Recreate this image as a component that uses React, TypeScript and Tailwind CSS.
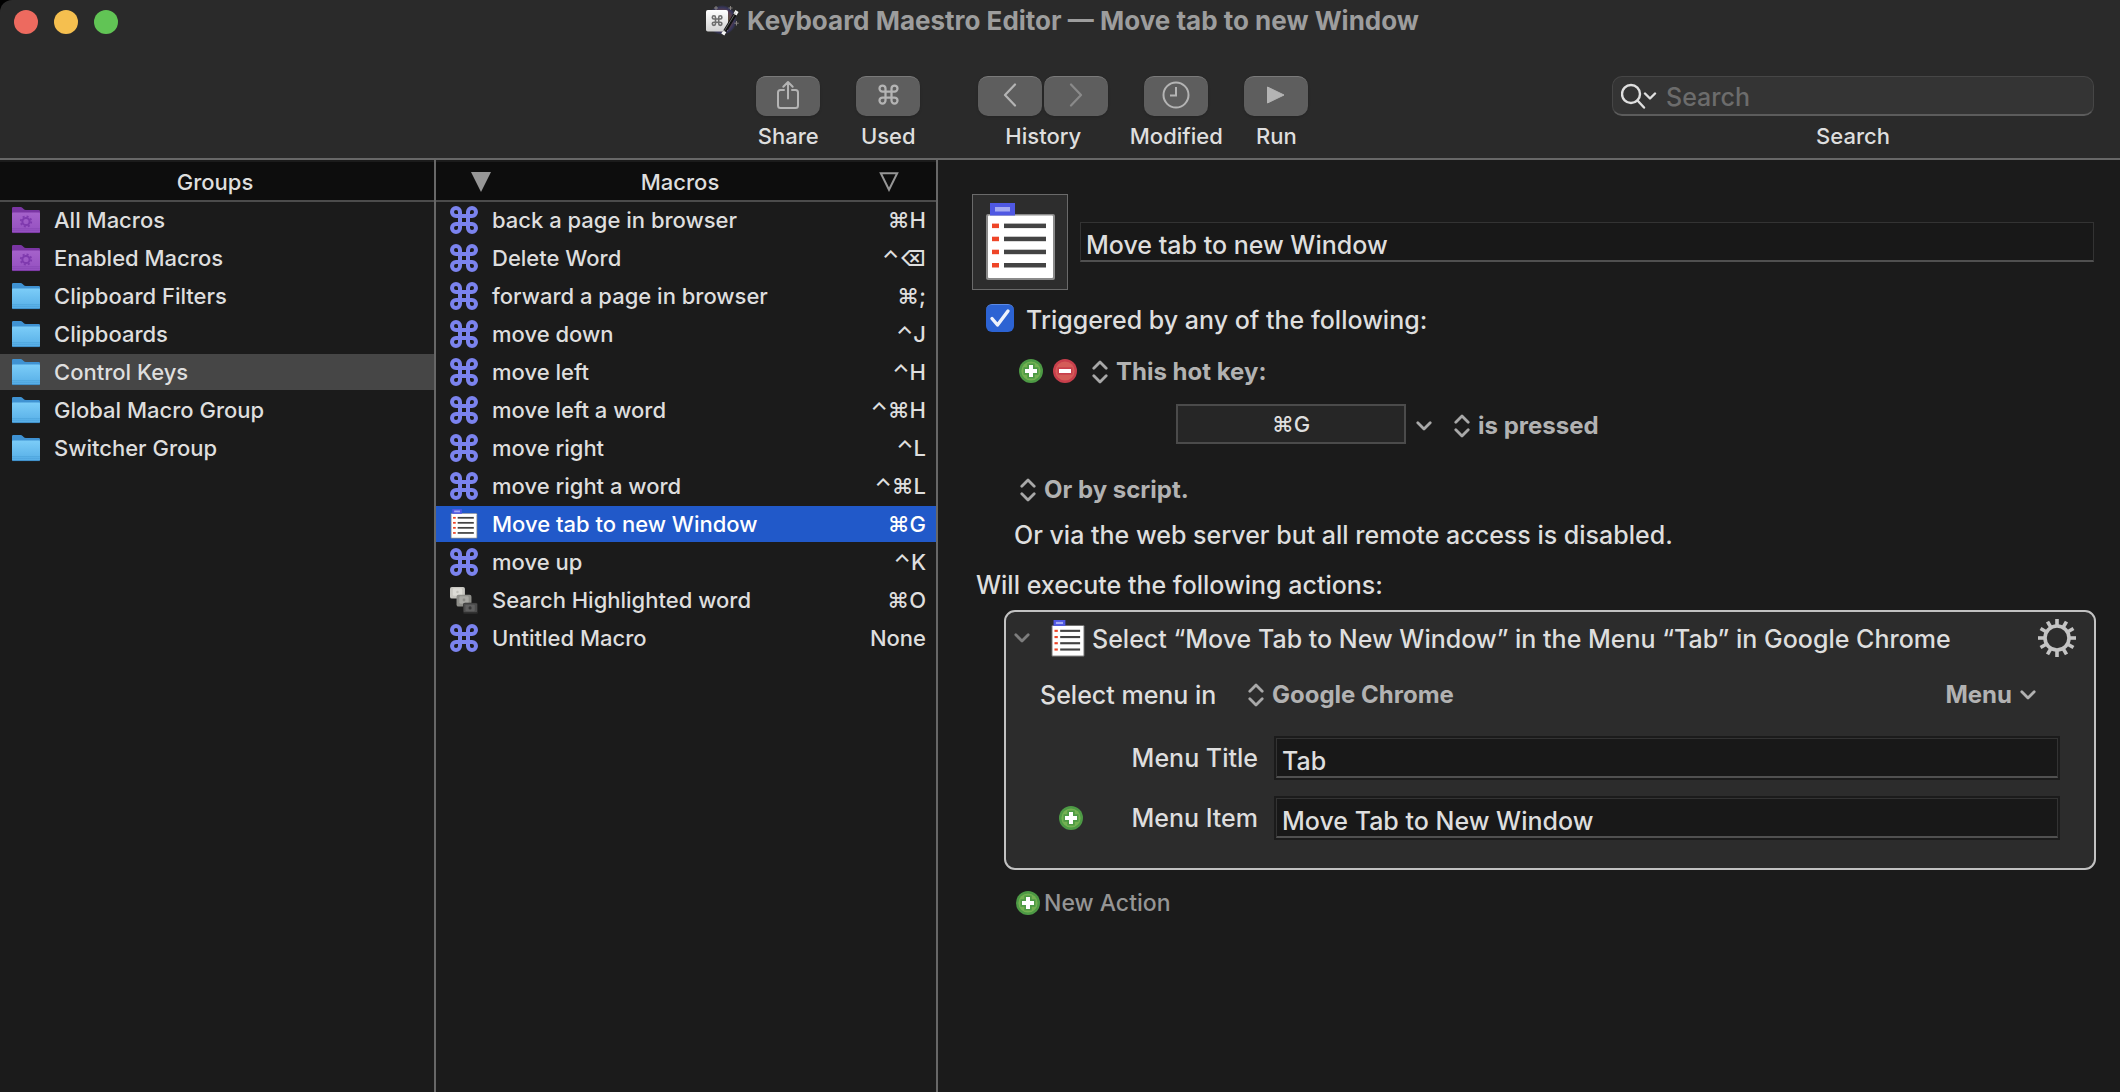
import React from "react";

type IconProps = { className?: string };

const COMMAND_PATH =
  "M18 6v16a4 4 0 1 0 4-4H6a4 4 0 1 0 4 4V6a4 4 0 1 0-4 4h16a4 4 0 1 0-4-4Z";

function CommandIcon({ className, weight = 4 }: IconProps & { weight?: number }) {
  return (
    <svg viewBox="0 0 28 28" className={className} fill="none" stroke="currentColor" strokeWidth={weight} aria-hidden="true">
      <path d={COMMAND_PATH} />
    </svg>
  );
}

function ListIcon({ className }: IconProps) {
  return (
    <svg viewBox="0 0 71 78" className={className} aria-hidden="true">
      <rect x="1" y="11" width="69" height="66" rx="2" fill="#8a8a8a" />
      <rect x="3" y="12.5" width="65" height="62.5" rx="1" fill="#ffffff" />
      <rect x="5" y="0" width="25" height="12.5" fill="#4f58e3" />
      <rect x="10" y="4" width="15" height="4.5" fill="#a6abf2" />
      {[20.6, 33.7, 46.7, 60].map((y) => (
        <g key={y}>
          <rect x="7" y={y} width="7" height="4.5" fill="#ee4528" />
          <rect x="19" y={y} width="42" height="4.5" fill="#434343" />
        </g>
      ))}
    </svg>
  );
}

function KeysIcon({ className }: IconProps) {
  return (
    <svg viewBox="0 0 30 30" className={className} aria-hidden="true">
      <rect x="0" y="1" width="16" height="12.5" rx="2" fill="#c9c8c2" />
      <rect x="3" y="2.5" width="10" height="8" rx="1.5" fill="#dddcd6" />
      <circle cx="8" cy="6.5" r="1.3" fill="#c2c1bb" />
      <rect x="7" y="9.5" width="16" height="12.5" rx="2" fill="#8f8f8a" />
      <rect x="10" y="11" width="10" height="8" rx="1.5" fill="#a9a9a4" />
      <circle cx="15" cy="15" r="1.5" fill="#8b8b86" />
      <rect x="14" y="18" width="16" height="12" rx="2" fill="#2a2a2a" />
      <rect x="14.5" y="18.5" width="14.5" height="9.5" rx="1" fill="#4d4d4d" />
      <rect x="16.5" y="20" width="10" height="7" rx="1" fill="#606060" />
      <circle cx="21.5" cy="23.5" r="1.7" fill="#383838" />
    </svg>
  );
}

function FolderIcon({ smart }: { smart?: boolean }) {
  const id = smart ? "folder-smart" : "folder-plain";
  return (
    <svg viewBox="0 0 28 27" className="h-[27px] w-7 shrink-0" aria-hidden="true">
      <defs>
        <linearGradient id={id} x1="0" y1="0" x2="0" y2="1">
          <stop offset="0" stopColor={smart ? "#a562cb" : "#7ccdf8"} />
          <stop offset="1" stopColor={smart ? "#9450c0" : "#56aee6"} />
        </linearGradient>
      </defs>
      <path
        d="M0 1.2Q0 0 1.2 0H8.6Q9.6 0 10.6 1L11.6 2Q12.6 3 13.8 3H26.8Q28 3 28 4.2V12H0Z"
        fill={smart ? "#7a35a3" : "#3f92d2"}
      />
      <path d="M0 6.2Q0 5.4 .8 5.4H27.2Q28 5.4 28 6.2V24.8Q28 26 26.8 26H1.2Q0 26 0 24.8Z" fill={`url(#${id})`} />
      <path d="M0 21.6H28M0 23.4H28" stroke={smart ? "#8644b2" : "#4a9fd9"} strokeWidth=".6" />
      <path d="M.3 25.6H27.7" stroke={smart ? "#733299" : "#3a86c0"} strokeWidth=".8" />
      {smart && (
        <g fill="none" stroke="#7f3aae">
          <circle cx="14" cy="14.5" r="3.6" strokeWidth="2" />
          <circle cx="14" cy="14.5" r="5.2" strokeWidth="1.8" strokeDasharray="2 2.08" />
        </g>
      )}
    </svg>
  );
}

function PlusIcon({ className }: IconProps) {
  return (
    <svg viewBox="0 0 24 24" className={className} aria-hidden="true">
      <circle cx="12" cy="12" r="12" fill="#4d9a45" />
      <circle cx="12" cy="12" r="9.6" fill="#74b152" />
      <path d="M8.3 4.5h7.4v3.8h3.8v7.4h-3.8v3.8H8.3v-3.8H4.5V8.3h3.8Z" fill="#4d9a45" />
      <path d="M10 6h4v4h4v4h-4v4h-4v-4H6v-4h4Z" fill="#ffffff" />
    </svg>
  );
}

function MinusIcon({ className }: IconProps) {
  return (
    <svg viewBox="0 0 24 24" className={className} aria-hidden="true">
      <circle cx="12" cy="12" r="12" fill="#c83f4c" />
      <circle cx="12" cy="12" r="9.6" fill="#d45c58" />
      <path d="M4.5 8.3h15v7.4h-15Z" fill="#c83f4c" />
      <path d="M6 10h12v4H6Z" fill="#ffffff" />
    </svg>
  );
}

function UpDownIcon() {
  return (
    <svg viewBox="0 0 16 24" className="h-6 w-4 shrink-0 text-[#a8a8a8]" fill="none" stroke="currentColor" strokeWidth="2.8" strokeLinecap="round" strokeLinejoin="round" aria-hidden="true">
      <path d="M1.8 8.2 8 2l6.2 6.2M1.8 15.8 8 22l6.2-6.2" />
    </svg>
  );
}

function DownIcon({ className }: IconProps) {
  return (
    <svg viewBox="0 0 16 10" className={className} fill="none" stroke="currentColor" strokeWidth="2.8" strokeLinecap="round" strokeLinejoin="round" aria-hidden="true">
      <path d="M1.8 1.8 8 8l6.2-6.2" />
    </svg>
  );
}

function GearIcon({ className }: IconProps) {
  return (
    <svg viewBox="0 0 38 38" className={className} fill="none" stroke="currentColor" aria-hidden="true">
      <circle cx="19" cy="19" r="12" strokeWidth="3.6" />
      <g strokeWidth="3.6">
        {Array.from({ length: 12 }, (_, i) => (
          <path key={i} d="M19 0v7" transform={`rotate(${i * 30} 19 19)`} />
        ))}
      </g>
    </svg>
  );
}

function AppIcon() {
  return (
    <svg viewBox="0 0 34 32" className="h-8 w-[34px] shrink-0" aria-hidden="true">
      <defs>
        <radialGradient id="app-glow">
          <stop offset=".3" stopColor="#5c5230" />
          <stop offset=".65" stopColor="#5a4050" />
          <stop offset=".85" stopColor="#35355a" />
          <stop offset="1" stopColor="#2a2a2a" />
        </radialGradient>
        <linearGradient id="app-key" x1="0" y1="0" x2="0" y2="1">
          <stop offset="0" stopColor="#ffffff" />
          <stop offset="1" stopColor="#d2d2d2" />
        </linearGradient>
      </defs>
      <circle cx="17" cy="15" r="15" fill="url(#app-glow)" />
      <rect x="1" y="5" width="22" height="21.5" rx="1.8" fill="url(#app-key)" />
      <g transform="translate(6.5 10) scale(.4)" fill="none" stroke="#6e6e6e" strokeWidth="4">
        <path d={COMMAND_PATH} />
      </g>
      <path d="M31.5 7 18.5 28.5" stroke="#111111" strokeWidth="3.6" />
      <path d="M32 6 30 9.5M19.8 26.3 17.8 29.5" stroke="#f4f4f4" strokeWidth="3.6" />
      <path d="M30.6 7.5 19 26.5" stroke="#8d8d8d" strokeWidth=".7" />
      <path d="M11 1v4M9 3h4M25.5 1v4M23.5 3h4M31.5 16v4.5M29.3 18.2h4.4" stroke="#8f8a86" strokeWidth=".9" />
    </svg>
  );
}

function ToolButton({ name, children, disabled }: { name: string; children: React.ReactNode; disabled?: boolean }) {
  return (
    <button
      type="button"
      aria-label={name}
      disabled={disabled}
      className="flex h-10 w-16 items-center justify-center rounded-[10px] border-t border-[#7a7a7a] bg-[#5e5e5e] pb-1 text-[#b4b4b4] shadow-sm disabled:text-[#8a8a8a]"
    >
      {children}
    </button>
  );
}

function ToolItem({ label, className, children }: { label: string; className?: string; children: React.ReactNode }) {
  return (
    <div className={`flex shrink-0 flex-col items-center gap-1.5 ${className ?? ""}`}>
      <div className="flex gap-0.5">{children}</div>
      <span className="text-[22px] leading-7 whitespace-nowrap">{label}</span>
    </div>
  );
}

function Toolbar() {
  return (
    <div className="flex pt-9 pr-[26px]">
      <div className="flex-[249]" />
      <ToolItem label="Share" className="w-16">
        <ToolButton name="Share">
          <svg viewBox="0 0 24 30" className="h-[30px] w-6" fill="none" stroke="currentColor" strokeWidth="2" strokeLinecap="round" strokeLinejoin="round">
            <path d="M8 10H4.5Q2 10 2 12.5V25.5Q2 28 4.5 28H19.5Q22 28 22 25.5V12.5Q22 10 19.5 10H16M12 18.5V2M7.3 6.7 12 2l4.7 4.7" />
          </svg>
        </ToolButton>
      </ToolItem>
      <ToolItem label="Used" className="ml-9 w-16">
        <ToolButton name="Used">
          <CommandIcon className="size-[21px]" weight={3} />
        </ToolButton>
      </ToolItem>
      <ToolItem label="History" className="ml-[58px]">
        <ToolButton name="Back">
          <svg viewBox="0 0 14 24" className="h-6 w-3.5" fill="none" stroke="currentColor" strokeWidth="2.2" strokeLinecap="round" strokeLinejoin="round">
            <path d="M12 1.5 2 12l10 10.5" />
          </svg>
        </ToolButton>
        <ToolButton name="Forward" disabled>
          <svg viewBox="0 0 14 24" className="h-6 w-3.5" fill="none" stroke="currentColor" strokeWidth="2.2" strokeLinecap="round" strokeLinejoin="round">
            <path d="m2 1.5 10 10.5L2 22.5" />
          </svg>
        </ToolButton>
      </ToolItem>
      <ToolItem label="Modified" className="ml-9 w-16">
        <ToolButton name="Modified">
          <svg viewBox="0 0 28 28" className="size-7" fill="none" stroke="currentColor" strokeWidth="2">
            <circle cx="14" cy="14" r="12.5" />
            <path d="M14 6v8.5H8" />
          </svg>
        </ToolButton>
      </ToolItem>
      <ToolItem label="Run" className="ml-9 w-16">
        <ToolButton name="Run">
          <svg viewBox="0 0 18 18" className="size-[18px]" fill="currentColor" stroke="currentColor" strokeLinejoin="round">
            <path d="M.5 1 17 9 .5 17Z" />
          </svg>
        </ToolButton>
      </ToolItem>
      <div className="flex-[100]" />
      <label className="flex w-[482px] flex-col items-center gap-1.5">
        <span className="flex h-10 w-full items-center rounded-[10px] border border-b-2 border-[#464646] border-b-[#5c5c5c] bg-[#343434] pl-2 text-[#dfdfdf]">
          <svg viewBox="0 0 38 26" className="h-[26px] w-[38px] shrink-0" fill="none" stroke="currentColor" strokeWidth="2.4" strokeLinecap="round" strokeLinejoin="round">
            <circle cx="10" cy="11" r="9" />
            <path d="m16.5 17.5 6.5 7M24 10.5l5 5 5-5" />
          </svg>
          <input type="search" placeholder="Search" className="ml-[7px] min-w-0 flex-1 bg-transparent pt-0.5 text-[25px] leading-8 outline-none placeholder:text-[#6c6c6c]" />
        </span>
        <span className="text-[22px] leading-7">Search</span>
      </label>
    </div>
  );
}

const GROUPS = [
  { name: "All Macros", smart: true },
  { name: "Enabled Macros", smart: true },
  { name: "Clipboard Filters" },
  { name: "Clipboards" },
  { name: "Control Keys", selected: true },
  { name: "Global Macro Group" },
  { name: "Switcher Group" },
];

type Macro = { name: string; keys: string; icon?: "list" | "keys"; selected?: boolean };

const MACROS: Macro[] = [
  { name: "back a page in browser", keys: "⌘H" },
  { name: "Delete Word", keys: "⌃⌫" },
  { name: "forward a page in browser", keys: "⌘;" },
  { name: "move down", keys: "⌃J" },
  { name: "move left", keys: "⌃H" },
  { name: "move left a word", keys: "⌃⌘H" },
  { name: "move right", keys: "⌃L" },
  { name: "move right a word", keys: "⌃⌘L" },
  { name: "Move tab to new Window", keys: "⌘G", icon: "list", selected: true },
  { name: "move up", keys: "⌃K" },
  { name: "Search Highlighted word", keys: "⌘O", icon: "keys" },
  { name: "Untitled Macro", keys: "None" },
];

const HEADER =
  "flex h-[42px] items-center border-t-2 border-b-2 border-t-[#1b1b1b] border-b-[#4c4c4c] bg-[#0d0d0d] pt-0.5 text-[22px] leading-7";

function GroupsColumn() {
  return (
    <nav className="w-[436px] shrink-0 border-r-2 border-[#676767]">
      <h2 className={`${HEADER} justify-center pr-1`}>Groups</h2>
      <ul className="flex flex-col gap-0.5">
        {GROUPS.map((g) => (
          <li key={g.name}>
            <button
              type="button"
              className={`flex h-9 w-full items-center gap-3.5 pl-3 text-left text-[22px] leading-7 ${g.selected ? "bg-[#464646]" : ""}`}
            >
              <FolderIcon smart={g.smart} />
              {g.name}
            </button>
          </li>
        ))}
      </ul>
    </nav>
  );
}

function MacrosColumn() {
  return (
    <section className="w-[502px] shrink-0 border-r-2 border-[#676767]">
      <div className={`${HEADER} pr-[37px] pl-[35px]`}>
        <button type="button" aria-label="Sort macros">
          <svg viewBox="0 0 20 20" className="size-5" fill="#969696">
            <path d="M0 0h20L10 20Z" />
          </svg>
        </button>
        <h2 className="flex-1 pr-2.5 text-center">Macros</h2>
        <button type="button" aria-label="Sort triggers">
          <svg viewBox="0 0 20 20" className="size-5" fill="none" stroke="#969696" strokeWidth="2">
            <path d="M1.8 1.2h16.4L10 17.8Z" />
          </svg>
        </button>
      </div>
      <ul className="flex flex-col gap-0.5">
        {MACROS.map((m) => (
          <li key={m.name}>
            <button
              type="button"
              className={`flex h-9 w-full items-center pr-2.5 pl-3.5 text-left text-[22px] leading-7 ${m.selected ? "bg-[#2159c9] text-white" : ""}`}
            >
              {m.icon === "list" ? (
                <ListIcon className="h-[30px] w-7 shrink-0" />
              ) : m.icon === "keys" ? (
                <KeysIcon className="size-7 shrink-0" />
              ) : (
                <CommandIcon className="size-7 shrink-0 text-[#7b83ee]" />
              )}
              <span className="ml-3.5 flex-1">{m.name}</span>
              <span>{m.keys}</span>
            </button>
          </li>
        ))}
      </ul>
    </section>
  );
}

function PopUp({ value, label }: { value: string; label: string }) {
  return (
    <label className="flex items-center gap-2">
      <UpDownIcon />
      <select aria-label={label} className="appearance-none bg-transparent text-[24px] leading-8 font-bold text-[#b2b2b2] [field-sizing:content]">
        <option>{value}</option>
      </select>
    </label>
  );
}

const FIELD =
  "h-10 w-full min-w-0 border border-b-2 border-[#333333] border-b-[#505050] bg-[#181818] pt-1.5 pl-[5px] text-[25px] leading-8 outline-none";

function ActionCard() {
  return (
    <article className="mt-[9px] ml-8 rounded-[11px] border-2 border-[#c2c2c2] bg-[#2c2c2c] pt-1.5 pb-7">
      <div className="flex h-10 items-center pr-[18px] pl-2">
        <button type="button" aria-label="Collapse action" className="text-[#7d7d7d]">
          <DownIcon className="h-2.5 w-4" />
        </button>
        <ListIcon className="ml-[21px] h-[37px] w-[34px] shrink-0" />
        <h3 className="ml-[7px] flex-1 pt-0.5 text-[25px] leading-8">
          Select “Move Tab to New Window” in the Menu “Tab” in Google Chrome
        </h3>
        <button type="button" aria-label="Action options" className="text-[#c4c4c4]">
          <GearIcon className="size-[38px]" />
        </button>
      </div>
      <div className="mt-[21px] flex items-center pr-[58px] pl-[34px]">
        <span className="w-52 text-[25px] leading-8">Select menu in</span>
        <PopUp value="Google Chrome" label="Application" />
        <label className="ml-auto flex items-center gap-2 text-[#b2b2b2]">
          <select aria-label="Menu presets" className="appearance-none bg-transparent text-[24px] leading-8 font-bold [field-sizing:content]">
            <option>Menu</option>
          </select>
          <DownIcon className="h-2.5 w-4" />
        </label>
      </div>
      <div className="mt-[25px] flex flex-col gap-4 pr-[34px] pl-[53px]">
        <div className="flex items-center">
          <label htmlFor="menu-title" className="w-[199px] shrink-0 text-right text-[25px] leading-8">
            Menu Title
          </label>
          <div className="ml-4 flex-1 bg-[#1b1b1b] p-0.5">
            <input id="menu-title" type="text" defaultValue="Tab" className={`${FIELD} block`} />
          </div>
        </div>
        <div className="flex items-center">
          <button type="button" aria-label="Add submenu">
            <PlusIcon className="size-6" />
          </button>
          <label htmlFor="menu-item" className="w-[175px] shrink-0 text-right text-[25px] leading-8">
            Menu Item
          </label>
          <div className="ml-4 flex-1 bg-[#1b1b1b] p-0.5">
            <input id="menu-item" type="text" defaultValue="Move Tab to New Window" className={`${FIELD} block`} />
          </div>
        </div>
      </div>
    </article>
  );
}

function EditorPanel() {
  return (
    <main className="min-w-0 flex-1 pt-[34px] pr-6 pb-8 pl-[34px]">
      <div className="flex items-center gap-3 pr-0.5">
        <button type="button" aria-label="Macro icon" className="flex size-24 shrink-0 items-center justify-center border border-[#6a6a6a] bg-[#2d2d2d]">
          <ListIcon className="h-[78px] w-[71px]" />
        </button>
        <input type="text" aria-label="Macro name" defaultValue="Move tab to new Window" className={FIELD} />
      </div>

      <label className="mt-3.5 ml-3.5 flex items-start gap-3 text-[25px] leading-8">
        <span className="grid size-7 shrink-0">
          <input
            type="checkbox"
            defaultChecked
            className="peer col-start-1 row-start-1 size-7 appearance-none rounded-md border-t border-[#5b8ae6] bg-[#2c63d3]"
          />
          <svg viewBox="0 0 28 28" className="pointer-events-none col-start-1 row-start-1 hidden size-7 peer-checked:block" fill="none" stroke="#eef2fb" strokeWidth="3.4" strokeLinecap="round" strokeLinejoin="round">
            <path d="m6 14.5 5.5 6.5L22 7" />
          </svg>
        </span>
        Triggered by any of the following:
      </label>

      <div className="mt-5 ml-[47px] flex items-center">
        <button type="button" aria-label="Add trigger" className="pb-0.5">
          <PlusIcon className="size-6" />
        </button>
        <button type="button" aria-label="Remove trigger" className="mr-[15px] ml-2.5 pb-0.5">
          <MinusIcon className="size-6" />
        </button>
        <PopUp value="This hot key:" label="Trigger type" />
      </div>

      <div className="mt-4 ml-[204px] flex items-center">
        <input
          type="text"
          aria-label="Hot key"
          readOnly
          value="⌘G"
          className="h-10 w-[230px] border-2 border-[#4b4b4b] bg-[#262626] text-center text-[22px] leading-8 outline-none"
        />
        <div className="flex items-center pt-1">
          <button type="button" aria-label="Hot key options" className="mr-[22px] ml-2.5 text-[#a8a8a8]">
            <DownIcon className="h-2.5 w-4" />
          </button>
          <PopUp value="is pressed" label="Key state" />
        </div>
      </div>

      <div className="mt-[30px] ml-12 flex">
        <PopUp value="Or by script." label="Script trigger" />
      </div>

      <p className="mt-[13px] ml-[42px] text-[25px] leading-8">Or via the web server but all remote access is disabled.</p>

      <h2 className="mt-[18px] ml-1 text-[25px] leading-8">Will execute the following actions:</h2>

      <ActionCard />

      <button type="button" className="mt-[17px] ml-11 flex items-center gap-1 text-[23px] leading-8 text-[#959595]">
        <PlusIcon className="size-6" />
        New Action
      </button>
    </main>
  );
}

export default function App() {
  return (
    <div className="flex min-h-screen flex-col bg-[#1b1b1b] font-['Inter',sans-serif] font-[450] text-[#dedede]">
      <div className="bg-black">
        <header className="h-40 rounded-tl-[12px] border-b-2 border-[#676767] bg-[#2a2a2a]">
          <div className="relative flex h-10 items-center justify-center gap-2 pt-0.5 pl-1">
            <div className="absolute top-2.5 left-3.5 flex gap-4">
              <button type="button" aria-label="Close" className="size-6 rounded-full bg-[#ed6a5f]" />
              <button type="button" aria-label="Minimize" className="size-6 rounded-full bg-[#f5bf4f]" />
              <button type="button" aria-label="Zoom" className="size-6 rounded-full bg-[#61c455]" />
            </div>
            <AppIcon />
            <h1 className="text-[26px] leading-8 font-bold text-[#9d9d9d]">Keyboard Maestro Editor — Move tab to new Window</h1>
          </div>
          <Toolbar />
        </header>
      </div>
      <div className="flex flex-1">
        <GroupsColumn />
        <MacrosColumn />
        <EditorPanel />
      </div>
    </div>
  );
}
